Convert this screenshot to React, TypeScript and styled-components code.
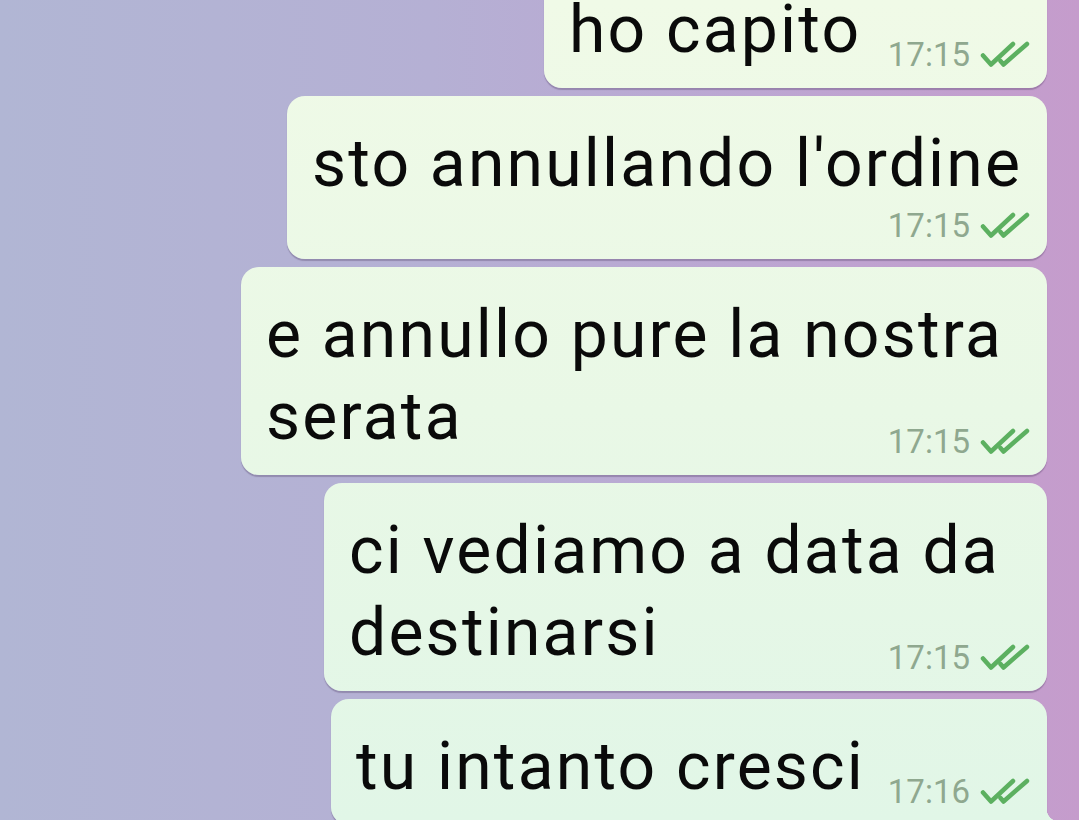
import React from "react";
import styled, { createGlobalStyle } from "styled-components";

const Messages = [
  { id: 1, text: "ho capito", time: "17:15", width: 503 },
  { id: 2, text: "sto annullando l'ordine", time: "17:15", width: 760 },
  { id: 3, text: "e annullo pure la nostra serata", time: "17:15", width: 806 },
  { id: 4, text: "ci vediamo a data da destinarsi", time: "17:15", width: 723 },
  { id: 5, text: "tu intanto cresci", time: "17:16", width: 716, last: true },
];

const GlobalStyle = createGlobalStyle`
  html, body {
    margin: 0;
    padding: 0;
    height: 100%;
    overflow: hidden;
  }
  body {
    font-family: Roboto, "Noto Sans", sans-serif;
  }
`;

function ReadTicks() {
  return (
    <StTicks viewBox="0 0 50 28" width="50" height="28">
      <path d="M3 14.5 L11 23.5 L33 3" />
      <path d="M20.5 20 L23.5 23.5 L47 3" />
    </StTicks>
  );
}

function App() {
  return (
    <>
      <GlobalStyle />
      <StChat>
        <StList>
          {Messages.map(({ id, text, time, width, last }) => (
            <StBubble key={id} $width={width} $last={!!last}>
              <StText>
                {text}
                <StMetaSpace />
              </StText>
              <StMeta>
                <StTime>{time}</StTime>
                <ReadTicks />
              </StMeta>
            </StBubble>
          ))}
        </StList>
      </StChat>
    </>
  );
}

export default App;

const StChat = styled.div`
  height: 100vh;
  display: flex;
  flex-direction: column;
  justify-content: flex-end;
  overflow: hidden;
  background: linear-gradient(90deg, #b1b6d4 0%, #b5b0d4 40%, #bca6d2 70%, #c59ccc 100%);
`;

const StList = styled.div`
  display: flex;
  flex-direction: column;
  align-items: flex-end;
  gap: 8px;
  padding-right: 32px;
  margin-bottom: -5px;
`;

const StBubble = styled.div<{ $width: number; $last: boolean }>`
  position: relative;
  display: flow-root;
  box-sizing: border-box;
  width: ${(p) => p.$width}px;
  padding: 27px 22px 17px 25px;
  border-radius: ${(p) => (p.$last ? "18px 18px 6px 18px" : "18px")};
  background: linear-gradient(180deg, #f0fae7 0%, #e9f8e6 50%, #e1f6e7 100%) fixed;
  box-shadow: 0 1.5px 1px rgba(70, 50, 90, 0.3);

  &::after {
    content: "";
    display: ${(p) => (p.$last ? "block" : "none")};
    position: absolute;
    right: -12px;
    bottom: 0;
    width: 12px;
    height: 16px;
    background: radial-gradient(circle at 100% 0, transparent 12px, #e1f6e7 12.5px);
  }
`;

const StText = styled.div`
  font-size: 66px;
  line-height: 82px;
  letter-spacing: 2.2px;
  color: #0a0a0a;
`;

const StMetaSpace = styled.span`
  float: right;
  width: 140px;
  height: 37px;
`;

const StMeta = styled.div`
  position: absolute;
  right: 17px;
  bottom: 17px;
  height: 32px;
  display: flex;
  align-items: center;
  gap: 10px;
`;

const StTime = styled.span`
  font-size: 33px;
  line-height: 32px;
  color: #8fa88f;
`;

const StTicks = styled.svg`
  display: block;
  fill: none;
  stroke: #5cb060;
  stroke-width: 4.5;
  stroke-linecap: round;
  stroke-linejoin: round;
`;
